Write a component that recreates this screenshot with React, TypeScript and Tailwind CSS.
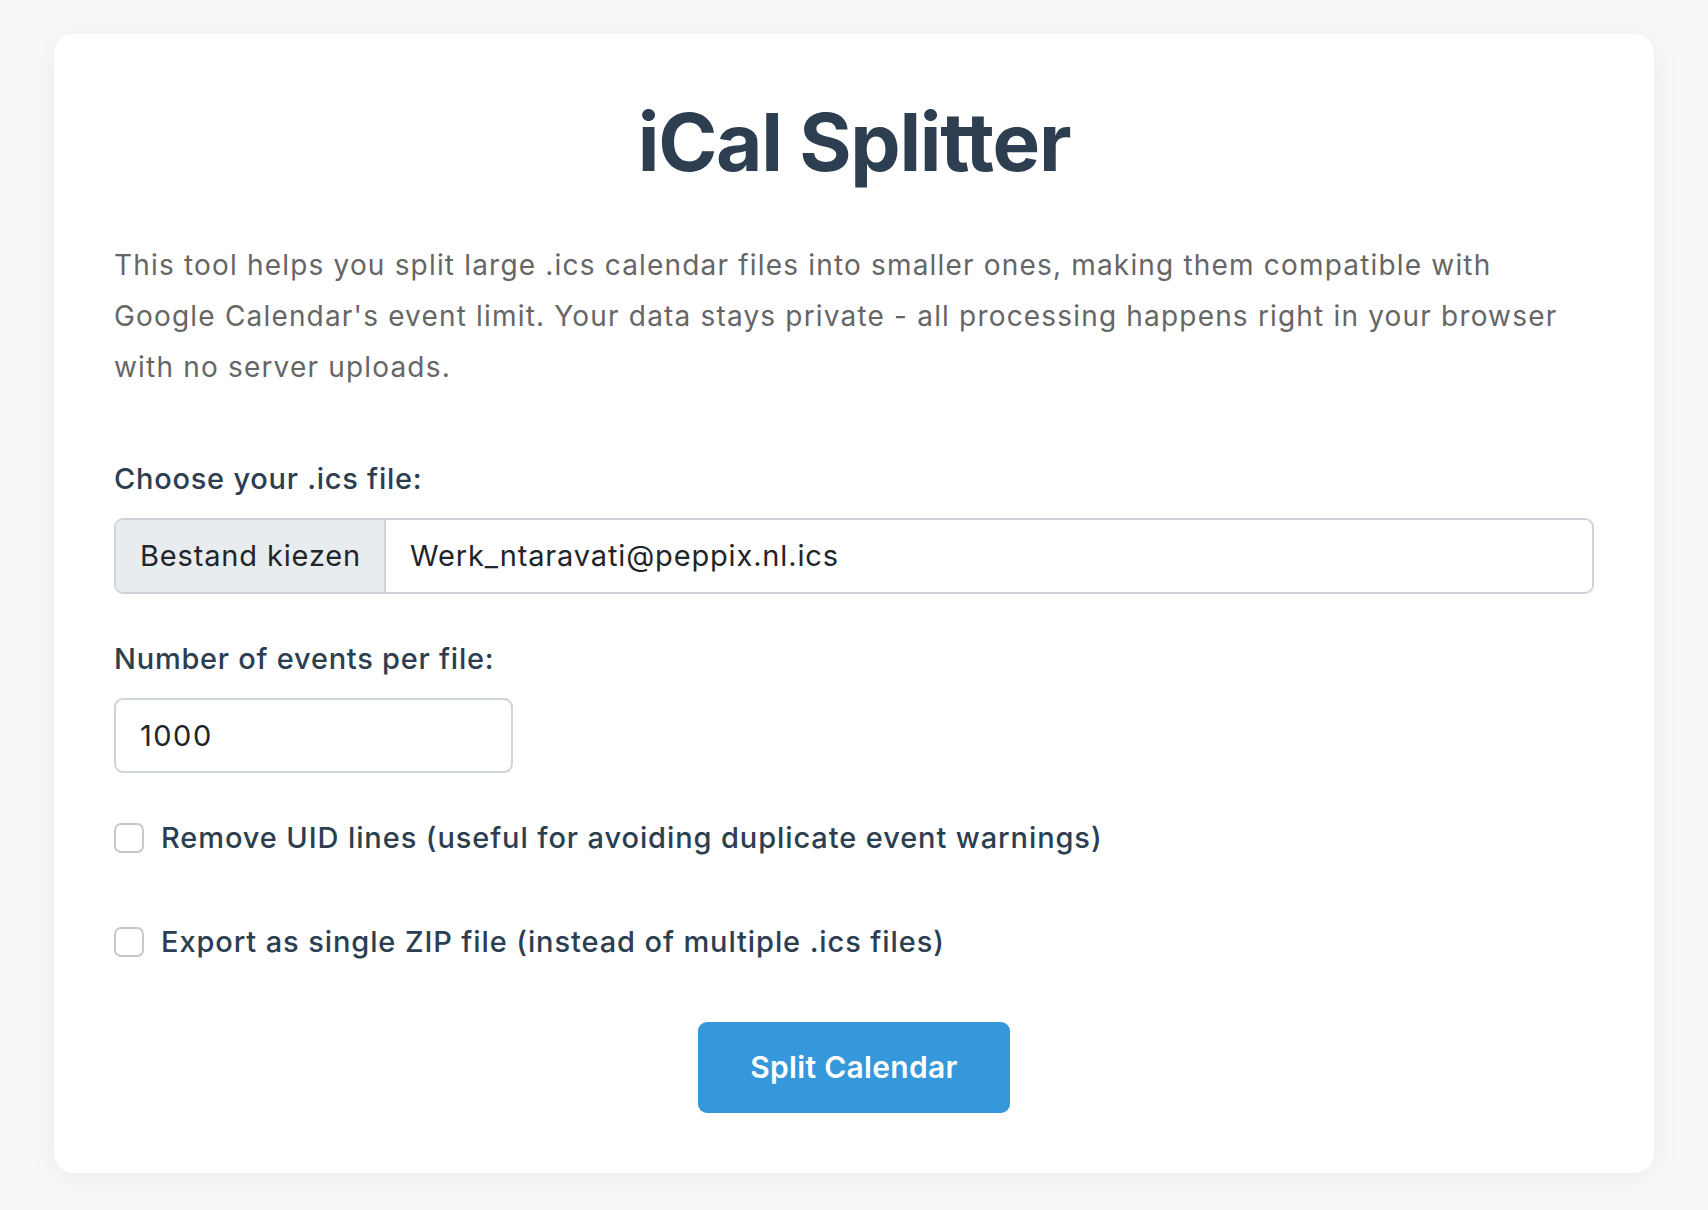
import { useState } from "react";

export default function App() {
  const [perFile, setPerFile] = useState("1000");
  const [removeUid, setRemoveUid] = useState(false);
  const [asZip, setAsZip] = useState(false);

  const checkbox =
    "h-[30px] w-[30px] shrink-0 appearance-none rounded-[7px] border-2 border-[#c8c8c8] bg-white checked:bg-[#3498db] checked:border-[#3498db]";

  return (
    <div className="min-h-screen bg-[#f7f8fa] pt-[34px] pb-[37px] font-['Inter','Noto_Sans',sans-serif]">
      <div className="mx-auto max-w-[1600px] rounded-[20px] bg-white p-[60px] shadow-[0_4px_30px_rgba(0,0,0,0.06)]">
        {/* Header */}
        <h1 className="text-center text-[80px] font-bold leading-[96px] tracking-[-1.3px] text-[#2c3e50]">
          iCal Splitter
        </h1>

        <p className="mt-[50px] text-[28px] leading-[51px] tracking-[1.18px] text-[#666666]">
          This tool helps you split large .ics calendar files into smaller ones, making them compatible with
          Google Calendar's event limit. Your data stays private - all processing happens right in your browser
          with no server uploads.
        </p>

        {/* File picker */}
        <label className="mt-[66px] block text-[29px] font-medium leading-[40px] tracking-[0.75px] text-[#2c3e50]">
          Choose your .ics file:
        </label>
        <div className="mt-[19px] flex h-[76px] overflow-hidden rounded-[9px] border-2 border-[#ced4da] text-[29px] tracking-[0.85px] text-[#212529]">
          <span className="flex w-[270px] items-center border-r-2 border-[#ced4da] bg-[#e9ecef] pl-[24px]">
            Bestand kiezen
          </span>
          <span className="flex items-center pl-[24px]">Werk_ntaravati@peppix.nl.ics</span>
        </div>

        {/* Events per file */}
        <label className="mt-[45px] block text-[29px] font-medium leading-[40px] tracking-[0.75px] text-[#2c3e50]">
          Number of events per file:
        </label>
        <input
          type="text"
          value={perFile}
          onChange={(e) => setPerFile(e.target.value)}
          className="mt-[19px] block h-[75px] w-[399px] rounded-[9px] border-2 border-[#ced4da] px-[24px] text-[29px] tracking-[1.5px] text-[#212529] outline-none"
        />

        {/* Options */}
        <label className="mt-[45px] flex h-[40px] items-center gap-[17px] text-[29px] font-medium tracking-[0.9px] text-[#2c3e50]">
          <input type="checkbox" checked={removeUid} onChange={() => setRemoveUid(!removeUid)} className={checkbox} />
          Remove UID lines (useful for avoiding duplicate event warnings)
        </label>
        <label className="mt-[64px] flex h-[40px] items-center gap-[17px] text-[29px] font-medium tracking-[0.9px] text-[#2c3e50]">
          <input type="checkbox" checked={asZip} onChange={() => setAsZip(!asZip)} className={checkbox} />
          Export as single ZIP file (instead of multiple .ics files)
        </label>

        <div className="mt-[60px] flex justify-center">
          <button className="h-[91px] w-[312px] rounded-[9px] bg-[#3498db] text-[30px] font-semibold tracking-[0.3px] text-white">
            Split Calendar
          </button>
        </div>
      </div>
    </div>
  );
}
